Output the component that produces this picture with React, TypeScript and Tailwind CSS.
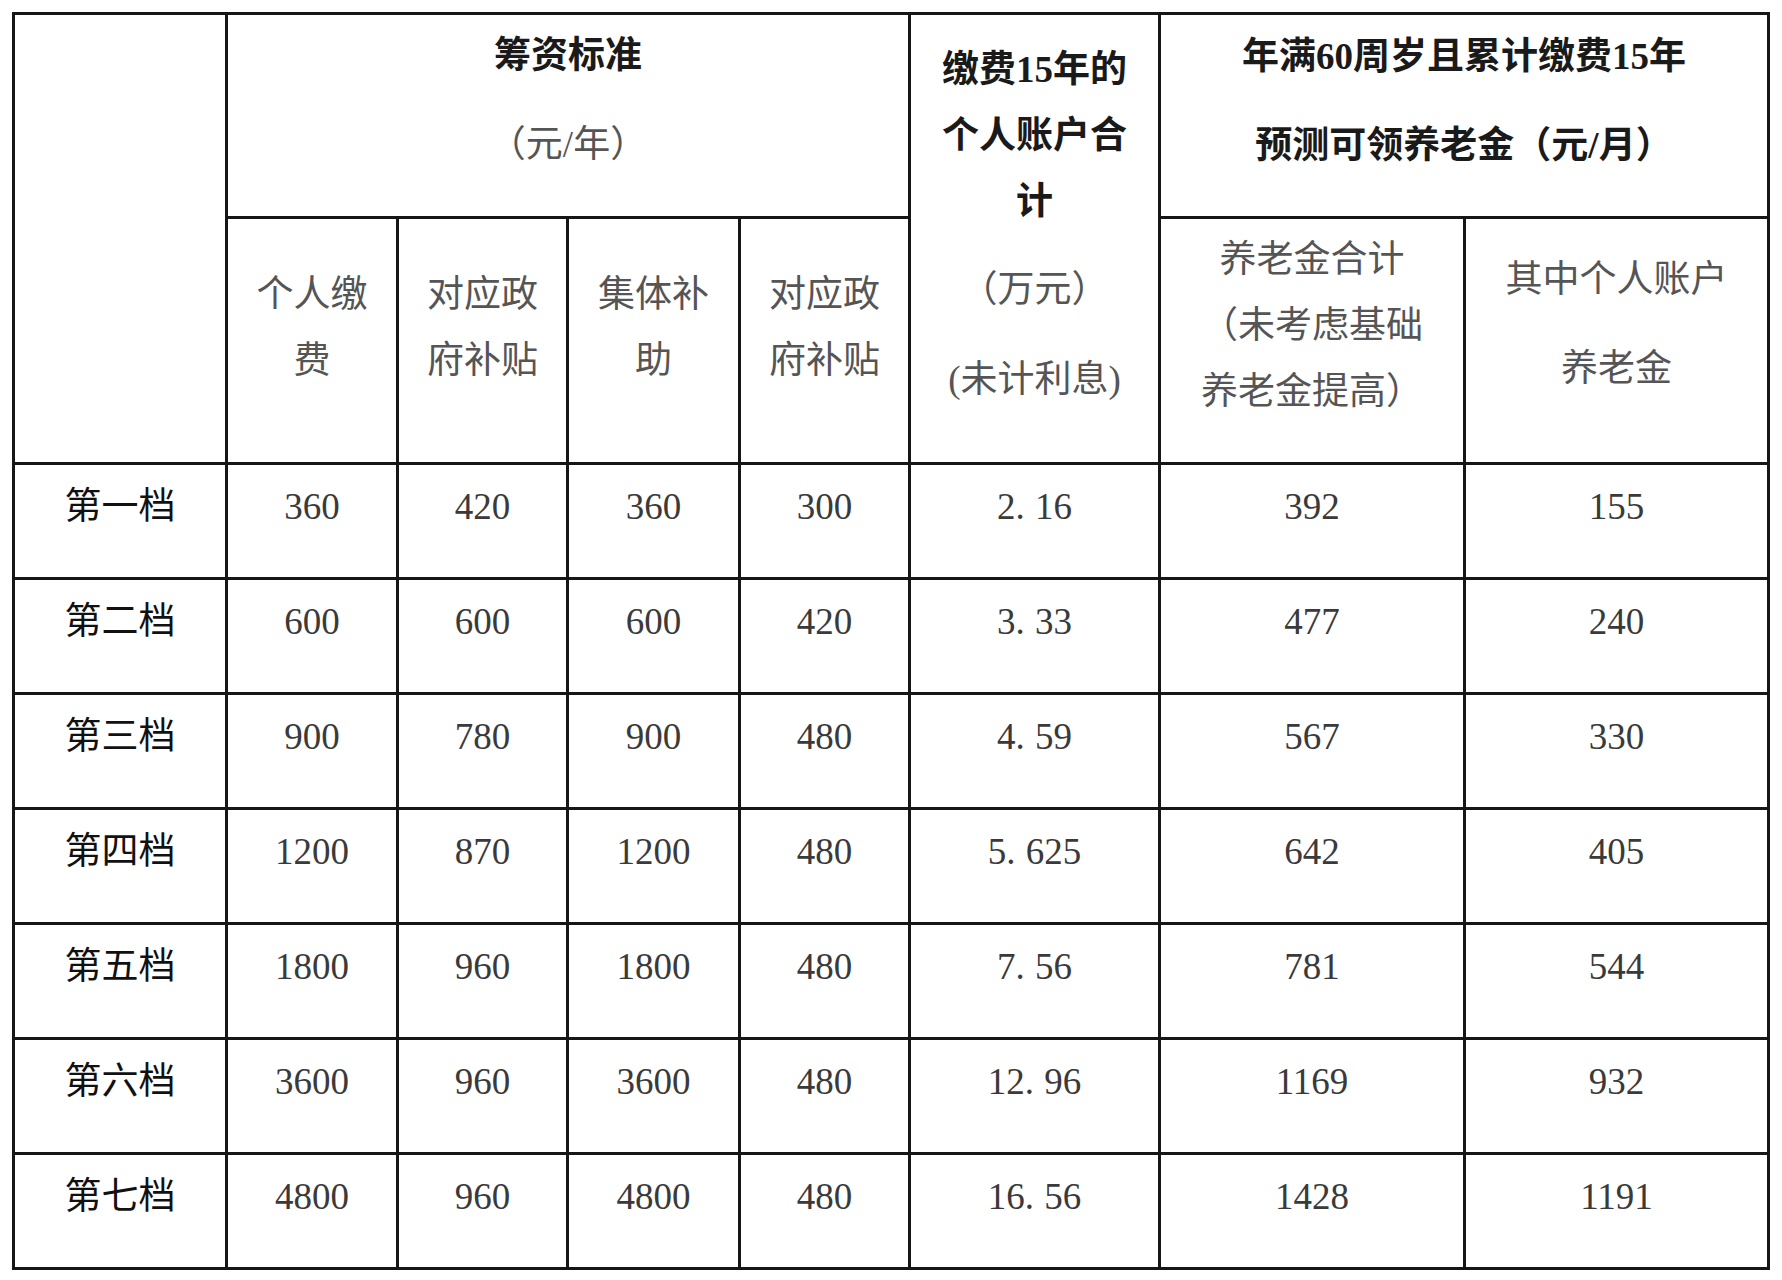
import React from 'react'

// ── Data ──────────────────────────────────────────────────────────────────────

const rows: [string, string, string, string, string, string, string, string][] = [
  ['第一档', '360', '420', '360', '300', '2.16', '392', '155'],
  ['第二档', '600', '600', '600', '420', '3.33', '477', '240'],
  ['第三档', '900', '780', '900', '480', '4.59', '567', '330'],
  ['第四档', '1200', '870', '1200', '480', '5.625', '642', '405'],
  ['第五档', '1800', '960', '1800', '480', '7.56', '781', '544'],
  ['第六档', '3600', '960', '3600', '480', '12.96', '1169', '932'],
  ['第七档', '4800', '960', '4800', '480', '16.56', '1428', '1191'],
]

function Amount({ value }: { value: string }) {
  const [int, frac] = value.split('.')
  if (frac === undefined) return <>{value}</>
  return (
    <>
      {int}
      <span className="pr-[0.28em]">.</span>
      {frac}
    </>
  )
}

// ── Cells ─────────────────────────────────────────────────────────────────────

function SubHead({ lines, pt = 'pt-[43px]' }: { lines: string[]; pt?: string }) {
  return (
    <div className={`bg-white flex flex-col items-center ${pt} text-[37px] leading-[66px] text-[#555]`}>
      {lines.map(l => (
        <div key={l} className="whitespace-nowrap">{l}</div>
      ))}
    </div>
  )
}

// ── Page ──────────────────────────────────────────────────────────────────────

export default function App() {
  return (
    <div className="min-h-screen bg-white pt-[12px] pl-[12px] font-['Liberation_Serif','Noto_Sans_CJK_SC',serif]">
      <div className="grid w-fit grid-cols-[210px_168px_167px_169px_167px_247px_302px_301px] grid-rows-[201px_243px_repeat(7,112px)] gap-[3px] p-[3px] bg-[#161616]">

        {/* Header, first band */}
        <div className="bg-white row-span-2" />

        <div className="bg-white col-span-4 flex flex-col items-center pt-[17px] text-[37px] leading-[48px]">
          <div className="font-bold text-[#1a1a1a]">筹资标准</div>
          <div className="mt-[41px] text-[#555]">（元/年）</div>
        </div>

        <div className="bg-white row-span-2 flex flex-col items-center pt-[22px] text-[37px] leading-[66px]">
          <div className="font-bold text-[#1a1a1a] whitespace-nowrap">缴费15年的</div>
          <div className="font-bold text-[#1a1a1a] whitespace-nowrap">个人账户合</div>
          <div className="font-bold text-[#1a1a1a]">计</div>
          <div className="mt-[22px] text-[#555]">（万元）</div>
          <div className="mt-[24px] text-[#555] whitespace-nowrap">(未计利息)</div>
        </div>

        <div className="bg-white col-span-2 flex flex-col items-center pt-[18px] text-[37px] leading-[48px]">
          <div className="font-bold text-[#1a1a1a] whitespace-nowrap">年满60周岁且累计缴费15年</div>
          <div className="mt-[41px] font-bold text-[#1a1a1a] whitespace-nowrap">预测可领养老金（元/月）</div>
        </div>

        {/* Header, second band */}
        <SubHead lines={['个人缴', '费']} />
        <SubHead lines={['对应政', '府补贴']} />
        <SubHead lines={['集体补', '助']} />
        <SubHead lines={['对应政', '府补贴']} />
        <SubHead lines={['养老金合计', '（未考虑基础', '养老金提高）']} pt="pt-[8px]" />
        <div className="bg-white flex flex-col items-center pt-[28px] text-[37px] leading-[66px] text-[#555]">
          <div className="whitespace-nowrap">其中个人账户</div>
          <div className="mt-[23px]">养老金</div>
        </div>

        {/* Body */}
        {rows.map(row => (
          <React.Fragment key={row[0]}>
            <div className="bg-white flex justify-center pt-[22px] text-[37px] leading-[40px] text-[#111]">
              {row[0]}
            </div>
            {row.slice(1).map((v, i) => (
              <div
                key={i}
                className="bg-white flex justify-center pt-[22px] text-[37px] leading-[40px] text-[#3a3a3a]"
              >
                <span><Amount value={v} /></span>
              </div>
            ))}
          </React.Fragment>
        ))}
      </div>
    </div>
  )
}
